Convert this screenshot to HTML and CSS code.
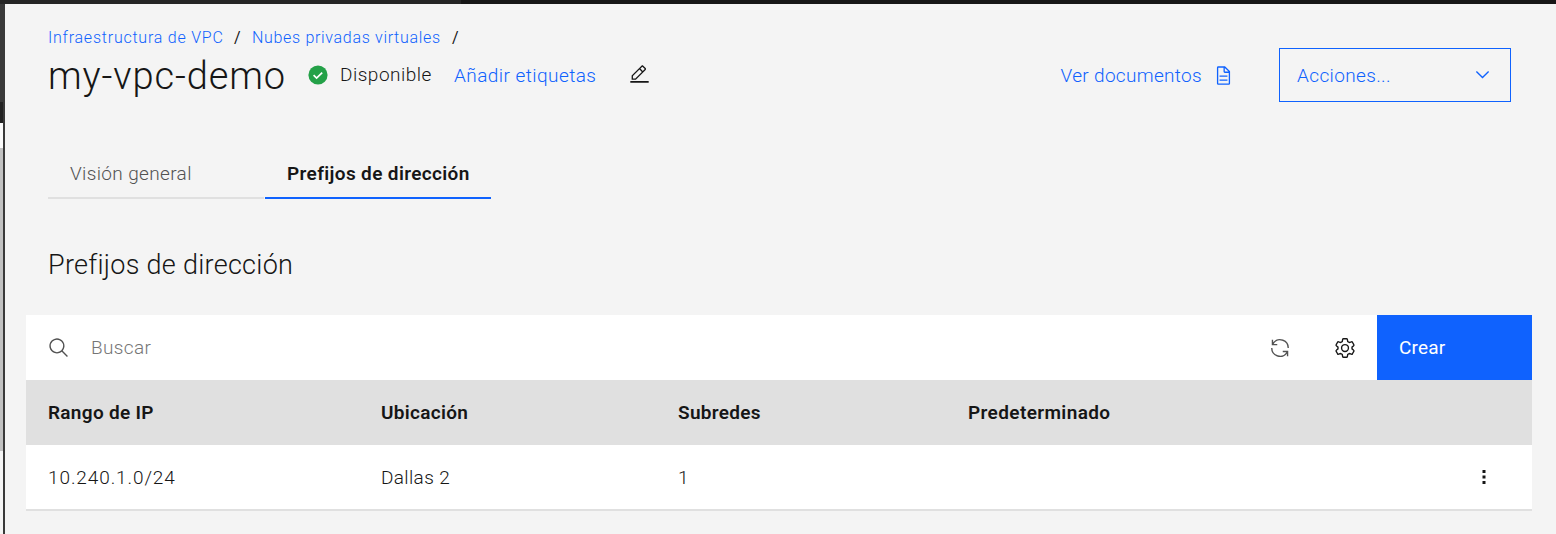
FILE: index.html
```
<!DOCTYPE html>
<html lang="es">
<head>
<meta charset="utf-8">
<title>my-vpc-demo</title>
<link rel="stylesheet" href="styles.css">
</head>
<body>
<div class="topbar"></div>
<div class="shell">
  <div class="rail"><div class="rail-dark"></div><div class="rail-shade"></div><div class="rail-light"></div><div class="rail-scroll"></div></div>
  <main class="page">
    <header class="header">
      <div class="heading">
        <nav class="crumbs"><a class="crumb-infra">Infraestructura de VPC</a><span class="sep">/</span><a class="crumb-vpc">Nubes privadas virtuales</a><span class="sep">/</span></nav>
        <div class="title-row">
          <h1 class="title">my-vpc-demo</h1>
          <svg class="ok" viewBox="0 0 20 20"><circle cx="10" cy="10" r="9.6" fill="#24a148"/><path d="M5.6 10.2l3 2.9 5.6-5.5" fill="none" stroke="#fff" stroke-width="1.7"/></svg>
          <span class="status">Disponible</span>
          <a class="tags">Añadir etiquetas</a>
          <svg class="edit" viewBox="0 0 32 32"><path d="M2 26H30V28.4H2zM25.4 9c.8-.8.8-2 0-2.8l-3.6-3.6c-.8-.8-2-.8-2.8 0l-15 15V24h6.4L25.4 9zM20.4 4L24 7.6l-3 3L17.4 7 20.4 4zM6 22v-3.6l10-10 3.6 3.6-10 10H6z"/></svg>
        </div>
      </div>
      <div class="tools">
        <a class="docs">Ver documentos</a>
        <svg class="doc" viewBox="0 0 32 32"><path d="M25.7 9.3l-7-7A.9.9 0 0 0 18 2H8a2 2 0 0 0-2 2v24a2 2 0 0 0 2 2h16a2 2 0 0 0 2-2V10a.9.9 0 0 0-.3-.7zM18 4.4l5.6 5.6H18zM24 28H8V4h8v6a2 2 0 0 0 2 2h6zM10 22h12v2H10zM10 16h12v2H10z"/></svg>
        <button class="actions"><span>Acciones...</span><svg viewBox="0 0 16 16"><path d="M8 11L3 6l.7-.7L8 9.6l4.3-4.3.7.7z"/></svg></button>
      </div>
    </header>
    <nav class="tabs"><a class="tab">Visión general</a><a class="tab selected">Prefijos de dirección</a></nav>
    <h2 class="subtitle">Prefijos de dirección</h2>
    <section class="table">
      <div class="toolbar">
        <svg class="search" viewBox="0 0 32 32"><path d="M29 27.59l-7.55-7.56a11 11 0 1 0-1.42 1.42L27.59 29zM4 13a9 9 0 1 1 9 9 9 9 0 0 1-9-9z"/></svg>
        <span class="placeholder">Buscar</span>
        <svg class="renew" viewBox="0 0 32 32"><path d="M12 10H6.78A11 11 0 0 1 27 16h2A13 13 0 0 0 6 7.68V4H4v8h8zM20 22h5.22A11 11 0 0 1 5 16H3a13 13 0 0 0 23 8.32V28h2v-8h-8z"/></svg>
        <svg class="gear" viewBox="0 0 16 16"><path d="M6.9 1.3h2.2q.5 0 .6.5l.3 1.5 1.2.7 1.4-.5q.5-.2.8.3l1 1.8q.3.5-.1.8L13.1 7.4v1.2l1.2 1q.4.3.1.8l-1 1.8q-.3.5-.8.3l-1.4-.5-1.2.7-.3 1.5q-.1.5-.6.5H6.9q-.5 0-.6-.5L6 12.700l-1.200-.7-1.400.5q-.5.2-.8-.3l-1-1.800q-.3-.5.1-.8l1.200-1V7.400l-1.200-1q-.4-.3-.1-.8l1-1.800q.3-.5.8-.3l1.400.5L6 3.300l.3-1.500q.1-.5.6-.5z"/><circle cx="8" cy="8" r="2.5"/></svg>
        <button class="create">Crear</button>
      </div>
      <div class="row head"><span>Rango de IP</span><span>Ubicación</span><span>Subredes</span><span class="default">Predeterminado</span></div>
      <div class="row data"><span class="range">10.240.1.0/24</span><span>Dallas 2</span><span>1</span><span></span><svg class="more" viewBox="0 0 6 14"><path d="M1.5 0h3v3h-3zM1.5 5.5h3v3h-3zM1.5 11h3v3h-3z"/></svg></div>
    </section>
  </main>
</div>
</body>
</html>
```

FILE: styles.css
```
* { box-sizing: border-box; }
body { margin: 0; height: 534px; overflow: hidden; background: #f4f4f4; color: #161616; font: 300 19px/24px Roboto, sans-serif; letter-spacing: .36px; white-space: nowrap; }
h1, h2 { margin: 0; font-weight: 300; }
svg { display: block; fill: currentColor; flex: none; }
button { font: inherit; letter-spacing: inherit; border: 0; border-radius: 0; text-align: left; }
.topbar { height: 4px; background: linear-gradient(90deg, #252525 461px, #171717 461px); }
.shell { display: flex; height: 530px; }
.rail { width: 5px; flex: none; border-right: 2px solid #393939; display: flex; flex-direction: column; }
.rail-dark { height: 98px; background: #393939; }
.rail-shade { height: 21px; background: #222; }
.rail-light { height: 25px; background: #fafafa; }
.rail-scroll { height: 303px; background: #c1c1c1; }
.page { flex: 1; padding: 0 24px 0 21px; }
.header { display: flex; justify-content: space-between; padding: 22px 21px 0 22px; height: 139px; }
.crumbs { display: flex; font-size: 16px; color: #0f62fe; }
.crumb-infra { width: 175px; letter-spacing: .77px; }
.crumb-vpc { width: 189px; letter-spacing: .68px; }
.sep { width: 29px; padding-left: 11px; color: #161616; font-weight: 400; }
.title-row { display: flex; align-items: center; height: 50px; }
.title { font-size: 38px; line-height: 50px; width: 260px; letter-spacing: .88px; padding-top: 2px; }
.ok { width: 20px; height: 20px; }
.status { margin-left: 12px; width: 92px; letter-spacing: .5px; }
.tags { margin-left: 22px; width: 142px; color: #0f62fe; letter-spacing: .44px; padding-top: 2px; }
.edit { width: 21px; height: 21px; margin: -2px 0 0 33px; }
.tools { display: flex; color: #0f62fe; height: 54px; margin-top: 22px; align-items: center; }
.docs { letter-spacing: .32px; padding-top: 2px; }
.doc { width: 21px; height: 21px; margin-left: 11px; }
.actions { margin-left: 45px; width: 232px; height: 54px; border: 1px solid #0f62fe; background: none; color: #0f62fe; display: flex; align-items: center; justify-content: space-between; padding: 0 17px; }
.actions span { padding-top: 2px; }
.actions svg { width: 21px; height: 21px; margin-top: -1px; }
.tabs { display: flex; gap: 1px; margin-left: 22px; height: 56px; }
.tab { width: 216px; padding: 19px 22px 0; border-bottom: 2px solid #e0e0e0; color: #525252; }
.tab.selected { width: 226px; border-color: #0f62fe; color: #161616; font-weight: 600; }
.subtitle { font-size: 27px; line-height: 36px; padding: 48px 0 0 22px; height: 116px; letter-spacing: .28px; }
.table { border-bottom: 2px solid #e0e0e0; background: #fff; }
.toolbar { display: flex; align-items: center; height: 65px; padding-left: 22px; }
.search { width: 22px; height: 22px; color: #525252; }
.placeholder { margin-left: 21px; color: #757575; flex: 1; }
.renew { width: 22px; height: 22px; color: #525252; margin-right: 43px; }
.gear { width: 22px; height: 22px; fill: none; stroke: #161616; stroke-width: 1; margin-right: 21px; }
.create { width: 155px; height: 65px; background: #0f62fe; color: #fff; padding: 0 22px; font-weight: 400; letter-spacing: .2px; }
.row { display: grid; grid-template-columns: 333px 297px 290px 1fr 6px; align-items: center; height: 65px; padding: 0 45px 0 22px; }
.head { background: #e0e0e0; font-weight: 600; letter-spacing: .3px; }
.default { letter-spacing: .38px; }
.data { height: 64px; padding-top: 1px; }
.range { letter-spacing: .9px; }
.more { width: 6px; height: 14px; margin-top: -1px; }
```
